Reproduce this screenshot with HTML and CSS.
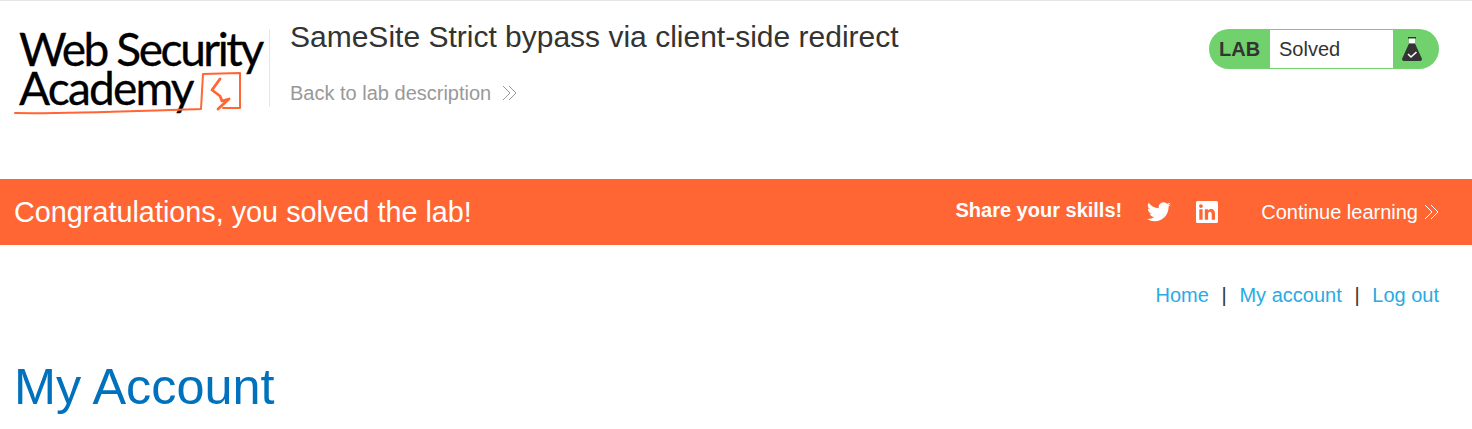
FILE: index.html
```html
<!DOCTYPE html>
<html lang="en">
<head>
    <meta charset="UTF-8">
    <title>SameSite Strict bypass via client-side redirect</title>
    <link rel="stylesheet" href="styles.css">
</head>
<body>
    <header class="lab-header">
        <a class="logo" href="#">
            <span class="logo-line logo-first">Web Security</span>
            <span class="logo-line logo-second">Academy</span>
            <svg class="logo-mark" width="245" height="118" viewBox="0 0 245 118" fill="none" stroke="#ff6633" stroke-linecap="round" stroke-linejoin="round">
                <path d="M15 113 C70 114 130 111 201 109 L203 74 L240 73 L240 108 L223 108" stroke-width="2"/>
                <path d="M220 79 L212 90 L220 96 L222 101 L229 99 L218 109" stroke-width="2.800"/>
            </svg>
        </a>
        <div class="title-block">
            <h2>SameSite Strict bypass via client-side redirect</h2>
            <a class="back-link" href="#">Back to lab description
                <svg class="chevrons" width="16" height="16" viewBox="0 0 16 16" fill="none" stroke="currentColor"><path d="M1 1 L8 8 L1 15M7 1 L14 8 L7 15"/></svg>
            </a>
        </div>
        <div class="lab-status">
            <span class="lab-tag">LAB</span>
            <span class="lab-state">Solved</span>
            <span class="lab-icon">
                <svg width="20" height="26" viewBox="0 0 20 26">
                    <rect x="6" y="1" width="8" height="1.600" fill="#333"/>
                    <rect x="7" y="2.600" width="6" height="5" fill="#fff"/>
                    <path d="M7 7.500 H13 L20 23 Q20 25 18 25 H2 Q0 25 0 23 Z" fill="#333"/>
                    <path d="M6 18 L9 21 L14.500 16" fill="none" stroke="#fff" stroke-width="1.600"/>
                </svg>
            </span>
        </div>
    </header>

    <section class="banner">
        <h4>Congratulations, you solved the lab!</h4>
        <div class="share">
            <span class="share-text">Share your skills!</span>
            <a class="share-icon" href="#">
                <svg width="24" height="20" viewBox="0 0 24 20"><path fill="#fff" d="M23.950 2.570a9.800 9.800 0 0 1-2.820.770 4.930 4.930 0 0 0 2.160-2.720 9.800 9.800 0 0 1-3.120 1.190 4.920 4.920 0 0 0-8.380 4.480A13.950 13.950 0 0 1 1.670.660a4.920 4.920 0 0 0 1.520 6.570 4.900 4.900 0 0 1-2.230-.620v.060a4.920 4.920 0 0 0 3.950 4.820 4.950 4.950 0 0 1-2.220.090 4.930 4.930 0 0 0 4.600 3.420A9.870 9.870 0 0 1 0 17.040a13.940 13.940 0 0 0 7.550 2.210c9.060 0 14.010-7.500 14.010-14.010 0-.210 0-.420-.010-.630a10 10 0 0 0 2.400-2.040z"/></svg>
            </a>
            <a class="share-icon" href="#">
                <svg width="22" height="22" viewBox="0 0 22 22"><path fill="#fff" fill-rule="evenodd" d="M1.500 0h19A1.500 1.500 0 0 1 22 1.500v19a1.500 1.500 0 0 1-1.500 1.500h-19A1.500 1.500 0 0 1 0 20.500v-19A1.500 1.500 0 0 1 1.500 0zM3.300 8.300v10.400h3.300V8.300zM4.950 3.200a1.900 1.900 0 1 0 0 3.800 1.900 1.900 0 0 0 0-3.800zM8.800 8.300v10.400h3.300v-5.400c0-1.500.6-2.500 1.900-2.500 1.200 0 1.700.9 1.700 2.500v5.400h3.300v-6c0-3.100-1.500-4.700-3.900-4.700-1.500 0-2.500.7-3 1.600V8.300z"/></svg>
            </a>
            <a class="continue" href="#">Continue learning
                <svg class="chevrons" width="16" height="16" viewBox="0 0 16 16" fill="none" stroke="currentColor"><path d="M1 1 L8 8 L1 15M7 1 L14 8 L7 15"/></svg>
            </a>
        </div>
    </section>

    <main class="content">
        <nav class="top-links">
            <a href="#">Home</a><span class="sep">|</span><a href="#">My account</a><span class="sep">|</span><a href="#">Log out</a>
        </nav>
        <h1>My Account</h1>
    </main>
</body>
</html>
```

FILE: styles.css
```css
body {
    margin: 0;
    height: 429px;
    overflow: hidden;
    background: #fff;
    color: #333332;
    font-family: "Liberation Sans", Arial, sans-serif;
}

a {
    text-decoration: none;
}

.lab-header {
    display: flex;
    align-items: flex-start;
    height: 178px;
    border-top: 1px solid #e6e6e6;
}

.logo {
    position: relative;
    display: flex;
    flex-direction: column;
    width: 250px;
    height: 78px;
    margin: 28px 0 0 15px;
    border-right: 1px solid #e6e6e6;
    padding-left: 4px;
    color: #000;
    font-family: Lato, sans-serif;
    font-size: 46px;
    line-height: 40px;
    -webkit-text-stroke: 0.300px #000;
    white-space: nowrap;
}

.logo-line {
    display: block;
}

.logo-first {
    letter-spacing: -2.400px;
}

.logo-second {
    margin-top: -1px;
    letter-spacing: -1.800px;
}

.logo-mark {
    position: absolute;
    left: -15px;
    top: -29px;
}

.title-block {
    margin-left: 20px;
    flex: 1;
}

h2 {
    margin: 18px 0 0;
    font-size: 30px;
    font-weight: 400;
    line-height: 36px;
}

.back-link {
    display: flex;
    align-items: center;
    gap: 11px;
    margin-top: 26px;
    color: #999;
    font-size: 20px;
    line-height: 24px;
}

.lab-status {
    display: flex;
    width: 230px;
    height: 40px;
    margin: 28px 33px 0 0;
    border-radius: 20px;
    background: #70d16d;
    overflow: hidden;
}

.lab-tag {
    width: 61px;
    padding-left: 10px;
    box-sizing: border-box;
    font-size: 20px;
    font-weight: 700;
    line-height: 41px;
}

.lab-state {
    width: 123px;
    height: 38px;
    margin-top: 1px;
    padding-left: 9px;
    box-sizing: border-box;
    background: #fff;
    font-size: 20px;
    line-height: 38px;
}

.lab-icon {
    display: flex;
    flex: 1;
    align-items: center;
    justify-content: center;
    padding-right: 8px;
}

.banner {
    display: flex;
    align-items: center;
    justify-content: space-between;
    height: 66px;
    padding: 0 32px 0 14px;
    background: #ff6633;
    color: #fff;
}

h4 {
    margin: 0;
    font-size: 28.800px;
    font-weight: 400;
}

.share {
    display: flex;
    align-items: center;
}

.share-text {
    margin-right: 25px;
    font-size: 20px;
    font-weight: 700;
    position: relative;
    top: -2px;
}

.share-icon {
    display: flex;
    margin-right: 25px;
}

.share-icon + .share-icon {
    margin-right: 43px;
}

.continue {
    display: flex;
    align-items: center;
    gap: 6px;
    color: #fff;
    font-size: 20px;
}

.content {
    padding: 0 33px 0 14px;
}

.top-links {
    display: flex;
    justify-content: flex-end;
    margin-top: 38px;
    font-size: 20px;
    line-height: 24px;
}

.top-links a {
    color: #29abe2;
}

.sep {
    margin: 0 12.700px;
    color: #333332;
}

h1 {
    margin: 49px 0 0;
    color: #0071bc;
    font-size: 50.400px;
    font-weight: 400;
    line-height: 62px;
}
```
